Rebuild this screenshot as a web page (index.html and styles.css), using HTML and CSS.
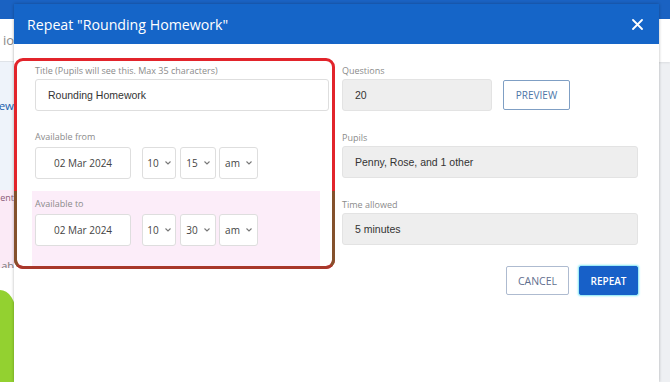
FILE: index.html
```html
<!DOCTYPE html>
<html lang="en">
<head>
<meta charset="utf-8">
<title>Repeat "Rounding Homework"</title>
<link rel="stylesheet" href="styles.css">
</head>
<body>
<div class="page">
  <header class="page-header"></header>
  <div class="page-main">
    <aside class="side">
      <div class="side-row side-tab"><span>io</span></div>
      <div class="side-row side-panel"><span>ew</span></div>
      <div class="side-pink">
        <div class="side-row side-assign"><span>ent</span></div>
        <div class="side-row side-avail"><span>ab</span></div>
      </div>
      <div class="side-bottom"><div class="blob"></div></div>
    </aside>
    <section class="content">
      <div class="content-top"></div>
    </section>
  </div>
</div>

<div class="modal">
  <div class="modal-head">
    <h1 class="modal-title">Repeat "Rounding Homework"</h1>
    <svg class="close" width="11" height="11" viewBox="0 0 11 11"><path d="M1 1L10 10M10 1L1 10" stroke="#fff" stroke-width="1.8" stroke-linecap="round"/></svg>
  </div>
  <div class="modal-body">
    <div class="col col-left">
      <div class="field">
        <div class="label">Title (Pupils will see this. Max 35 characters)</div>
        <div class="input">Rounding Homework</div>
      </div>
      <div class="field date-field">
        <div class="label">Available from</div>
        <div class="dt-row">
          <div class="date">02 Mar 2024</div>
          <div class="select s-hour">10<svg width="6" height="4" viewBox="0 0 6 4"><path d="M0.5 0.5L3 3L5.5 0.5" fill="none" stroke="#777" stroke-width="1.1"/></svg></div>
          <div class="select s-min">15<svg width="6" height="4" viewBox="0 0 6 4"><path d="M0.5 0.5L3 3L5.5 0.5" fill="none" stroke="#777" stroke-width="1.1"/></svg></div>
          <div class="select s-ampm">am<svg width="6" height="4" viewBox="0 0 6 4"><path d="M0.5 0.5L3 3L5.5 0.5" fill="none" stroke="#777" stroke-width="1.1"/></svg></div>
        </div>
      </div>
      <div class="field date-field ghost">
        <div class="label">Available to</div>
        <div class="dt-row">
          <div class="date">02 Mar 2024</div>
          <div class="select s-hour">10<svg width="6" height="4" viewBox="0 0 6 4"><path d="M0.5 0.5L3 3L5.5 0.5" fill="none" stroke="#777" stroke-width="1.1"/></svg></div>
          <div class="select s-min">30<svg width="6" height="4" viewBox="0 0 6 4"><path d="M0.5 0.5L3 3L5.5 0.5" fill="none" stroke="#777" stroke-width="1.1"/></svg></div>
          <div class="select s-ampm">am<svg width="6" height="4" viewBox="0 0 6 4"><path d="M0.5 0.5L3 3L5.5 0.5" fill="none" stroke="#777" stroke-width="1.1"/></svg></div>
        </div>
      </div>
    </div>
    <div class="col col-right">
      <div class="field">
        <div class="label">Questions</div>
        <div class="q-row">
          <div class="input ro q-input">20</div>
          <button class="btn btn-outline btn-preview">PREVIEW</button>
        </div>
      </div>
      <div class="field">
        <div class="label">Pupils</div>
        <div class="input ro">Penny, Rose, and 1 other</div>
      </div>
      <div class="field">
        <div class="label">Time allowed</div>
        <div class="input ro">5 minutes</div>
      </div>
      <div class="actions">
        <button class="btn btn-outline btn-cancel">CANCEL</button>
        <button class="btn btn-primary">REPEAT</button>
      </div>
    </div>
  </div>
</div>

<div class="annot"><div class="annot-lower"></div></div>
</body>
</html>
```

FILE: styles.css
```css
* { box-sizing: border-box; }
html, body { margin: 0; padding: 0; }
body {
  width: 670px;
  height: 382px;
  overflow: hidden;
  position: relative;
  background: #fff;
  font-family: "Open Sans", "Liberation Sans", sans-serif;
}

/* background page */
.page { display: flex; flex-direction: column; height: 382px; }
.page-header { height: 19px; flex: none; background: #1a62c2; }
.page-main { flex: 1; display: flex; min-height: 0; }
.side { width: 14px; flex: none; display: flex; flex-direction: column; }
.side-row { display: flex; justify-content: flex-end; white-space: nowrap; }
.side-tab { height: 43px; flex: none; align-items: center; background: #fff; border-bottom: 1px solid #dfe3e8; color: #8a8a8a; font-size: 13px; }
.side-panel { height: 128px; flex: none; align-items: flex-start; padding-top: 36px; background: #eef3fa; color: #2160ad; font-size: 11.5px; }
.side-pink { height: 78px; flex: none; display: flex; flex-direction: column; justify-content: space-between; background: #fbeaf6; }
.side-assign { font-size: 9px; line-height: 16px; color: #8a5a76; }
.side-avail { font-size: 11px; line-height: 14px; color: #7a7a7a; margin-bottom: -5px; }
.side-bottom { flex: 1; background: #fff; padding-top: 22px; }
.blob { width: 16px; height: 100%; background: #93d130; border-top-right-radius: 16px 24px; }
.content { flex: 1; display: flex; flex-direction: column; background: #eef0f3; }
.content-top { height: 43px; background: #fff; box-shadow: 0 1px 2px rgba(0,0,0,0.08); }

/* modal */
.modal {
  position: absolute;
  left: 14px;
  top: 4px;
  width: 645px;
  height: 378px;
  background: #fff;
  box-shadow: 0 0 3px rgba(0,0,0,0.28);
}
.modal-head {
  height: 40px;
  background: #1565c8;
  display: flex;
  align-items: center;
  justify-content: space-between;
  padding: 0 16px 0 13px;
}
.modal-title { margin: 0; font-size: 14.2px; font-weight: 400; color: #fff; }
.close { display: block; }

.modal-body {
  display: grid;
  grid-template-columns: 294px 296px;
  column-gap: 13px;
  padding: 20px 21px 0 21px;
}
.col { display: flex; flex-direction: column; }
.col-left { gap: 19px; }
.col-right { gap: 20px; }
.field { display: flex; flex-direction: column; }
.label { font-size: 9px; line-height: 13px; color: #8b8b8b; margin-bottom: 2px; white-space: nowrap; }
.date-field .label { margin-bottom: 4px; }
.col-left .ghost { margin-top: -7px; padding-top: 6px; margin-left: -3px; padding-left: 3px; margin-right: 9px; padding-bottom: 20px; background: #fcedf9; }

.input {
  height: 32px;
  border: 1px solid #dedede;
  border-radius: 3px;
  background: #fff;
  display: flex;
  align-items: center;
  padding-left: 12px;
  font-family: "Liberation Sans", Arial, sans-serif;
  font-size: 10.5px;
  color: #333;
}
.input.ro { background: #eeeeee; border-color: #e3e3e3; }
.q-row { display: flex; align-items: center; gap: 11px; }
.q-input { width: 150px; }

.dt-row { display: flex; align-items: center; }
.date, .select {
  height: 32px;
  border: 1px solid #dedede;
  border-radius: 3px;
  background: #fff;
  display: flex;
  align-items: center;
  justify-content: center;
  font-size: 10px;
  color: #444;
}
.date { width: 96px; margin-right: 11px; }
.select { gap: 6px; }
.select svg { display: block; }
.s-hour { width: 34px; margin-right: 4px; }
.s-min { width: 36px; margin-right: 3px; }
.s-ampm { width: 39px; }

.btn {
  font-family: "Open Sans", "Liberation Sans", sans-serif;
  font-size: 10px;
  font-weight: 400;
  border-radius: 2px;
  padding: 0;
  display: flex;
  align-items: center;
  justify-content: center;
}
.btn-outline { background: #fff; border: 1px solid #7f9fc4; color: #4d76a8; }
.btn-preview { width: 67px; height: 30px; }
.actions { display: flex; justify-content: flex-end; gap: 10px; margin-top: 1px; }
.btn-cancel { width: 63px; height: 29px; border-color: #aebbd0; color: #5f6f8e; font-size: 10.5px; }
.btn-primary { width: 59px; height: 29px; background: #1760c8; border: 1px solid #1760c8; color: #fff; font-weight: 600; box-shadow: 0 0 2px 1px #7fe6f4; }

/* highlight annotation */
.annot {
  position: absolute;
  left: 14px;
  top: 58px;
  width: 321px;
  height: 211px;
  border: 3px solid #e2242b;
  border-radius: 9px;
}
.annot-lower {
  position: absolute;
  left: -3px;
  right: -3px;
  bottom: -3px;
  height: 78px;
  border: 3px solid #84512c;
  border-bottom-color: #a8382b;
  border-top: none;
  border-radius: 0 0 9px 9px;
}
```
